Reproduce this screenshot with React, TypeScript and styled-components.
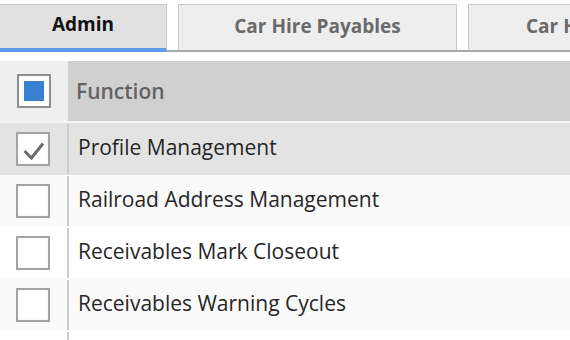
import React, { useState } from 'react';
import styled, { createGlobalStyle } from 'styled-components';

const GlobalStyle = createGlobalStyle`
  html, body {
    margin: 0;
    padding: 0;
    background: #ffffff;
    overflow: hidden;
  }
  body {
    font-family: "Open Sans", "Liberation Sans", sans-serif;
  }
`;

const Page = styled.div`
  width: 570px;
  height: 340px;
  overflow: hidden;
`;

const TabBar = styled.div`
  display: flex;
  align-items: flex-start;
  gap: 11px;
  height: 46px;
  padding-top: 4px;
  border-bottom: 2px solid #a8a8a8;
  white-space: nowrap;
`;

const Tab = styled.button<{ $active?: boolean; $width?: number }>`
  flex: none;
  box-sizing: border-box;
  width: ${p => (p.$width ? `${p.$width}px` : 'auto')};
  padding: 0 57px;
  height: ${p => (p.$active ? '48px' : '46px')};
  margin: 0;
  border: 1px solid #c9c9c9;
  border-bottom: ${p => (p.$active ? '4px solid #5b9be8' : 'none')};
  background: ${p => (p.$active ? '#e1e1e1' : '#eeeeee')};
  color: ${p => (p.$active ? '#111111' : '#6a6a6a')};
  font-family: "Open Sans", "Liberation Sans", sans-serif;
  font-weight: 700;
  font-size: 19px;
  line-height: 1;
  display: flex;
  align-items: center;
  justify-content: center;
  padding-bottom: ${p => (p.$active ? '5px' : '3px')};
  cursor: pointer;

  &:first-child {
    border-left: none;
  }
`;

const Table = styled.div`
  margin-top: 9px;
  display: flex;
  flex-direction: column;
`;

const HeaderRow = styled.div`
  display: flex;
  height: 60px;
  border-bottom: 2px solid #f4f4f4;
`;

const Row = styled.div<{ $bg: string }>`
  display: flex;
  height: 52px;
  background: ${p => p.$bg};
`;

const CheckCell = styled.div<{ $header?: boolean }>`
  position: relative;
  flex: none;
  width: 68px;
  display: flex;
  align-items: center;
  justify-content: center;
  background: ${p => (p.$header ? '#efefef' : 'transparent')};

  ${p =>
    !p.$header &&
    `
    &::after {
      content: '';
      position: absolute;
      right: -1px;
      top: 1px;
      bottom: 1px;
      width: 2px;
      background: #cdcdcd;
    }
  `}
`;

const HeaderCell = styled.div`
  flex: 1;
  display: flex;
  align-items: center;
  padding-left: 8px;
  padding-bottom: 1px;
  background: #d0d0d0;
  color: #636363;
  font-size: 21px;
  font-weight: 600;
`;

const FunctionCell = styled.div`
  flex: 1;
  display: flex;
  align-items: center;
  padding-left: 10px;
  padding-bottom: 5px;
  color: #262626;
  font-size: 21px;
  font-weight: 400;
`;

const Box = styled.div`
  box-sizing: border-box;
  width: 34px;
  height: 34px;
  margin-left: -2px;
  border: 2px solid #a3a3a3;
  background: #ffffff;
  box-shadow: inset 0 0 1px rgba(0, 0, 0, 0.25);
  display: flex;
  align-items: center;
  justify-content: center;
  cursor: pointer;
`;

const HeaderBox = styled(Box)`
  margin-left: 0;
  border-color: #8f8f8f;
`;

const Indeterminate = styled.div`
  width: 20px;
  height: 20px;
  background: #3a80d2;
`;

const rows = [
  'Profile Management',
  'Railroad Address Management',
  'Receivables Mark Closeout',
  'Receivables Warning Cycles',
  '',
];

const rowBg = (i: number, checked: boolean) =>
  checked ? '#e3e3e3' : i % 2 === 1 ? '#fafafa' : '#ffffff';

function CheckMark() {
  return (
    <svg width="30" height="30" viewBox="0 0 30 30">
      <path
        d="M6.5 17 L13.5 24 L25 9.5"
        fill="none"
        stroke="#6b6b6b"
        strokeWidth="3"
        strokeLinecap="butt"
        strokeLinejoin="miter"
      />
    </svg>
  );
}

export default function App() {
  const [checked, setChecked] = useState<Record<string, boolean>>({
    'Profile Management': true,
  });

  const toggle = (name: string) =>
    setChecked(prev => ({ ...prev, [name]: !prev[name] }));

  return (
    <Page>
      <GlobalStyle />
      <TabBar>
        <Tab $active $width={167}>Admin</Tab>
        <Tab $width={279}>Car Hire Payables</Tab>
        <Tab>Car Hire Receivables</Tab>
      </TabBar>

      <Table>
        <HeaderRow>
          <CheckCell $header>
            <HeaderBox>
              <Indeterminate />
            </HeaderBox>
          </CheckCell>
          <HeaderCell>Function</HeaderCell>
        </HeaderRow>
        {rows.map((name, i) => (
          <Row key={name || `row-${i}`} $bg={rowBg(i, !!checked[name])}>
            <CheckCell>
              <Box onClick={() => toggle(name)}>
                {checked[name] && <CheckMark />}
              </Box>
            </CheckCell>
            <FunctionCell>{name}</FunctionCell>
          </Row>
        ))}
      </Table>
    </Page>
  );
}
